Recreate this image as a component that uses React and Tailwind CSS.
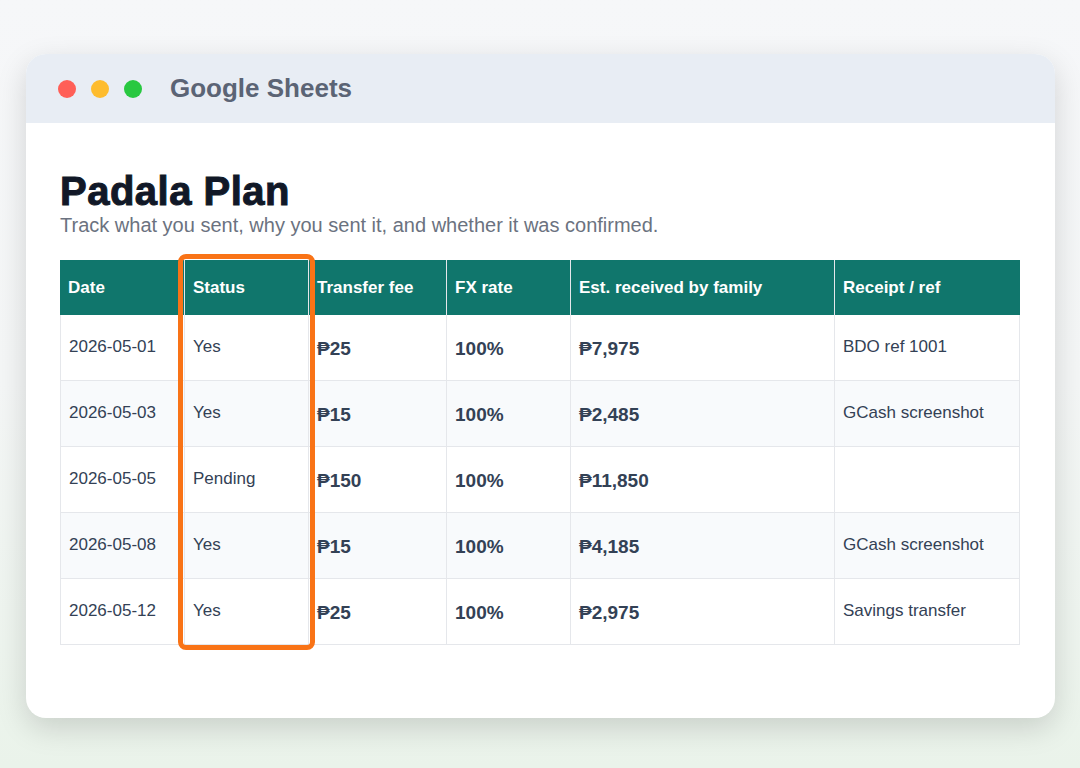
export default function App() {
  const rows = [
    ["2026-05-01", "Yes", "₱25", "100%", "₱7,975", "BDO ref 1001"],
    ["2026-05-03", "Yes", "₱15", "100%", "₱2,485", "GCash screenshot"],
    ["2026-05-05", "Pending", "₱150", "100%", "₱11,850", ""],
    ["2026-05-08", "Yes", "₱15", "100%", "₱4,185", "GCash screenshot"],
    ["2026-05-12", "Yes", "₱25", "100%", "₱2,975", "Savings transfer"],
  ];
  const widths = ["w-[124px]", "w-[124px]", "w-[138px]", "w-[124px]", "w-[264px]", "w-[186px]"];
  const heads = ["Date", "Status", "Transfer fee", "FX rate", "Est. received by family", "Receipt / ref"];
  return (
    <div className="w-[1080px] h-[768px] bg-gradient-to-b from-[#f6f7f9] via-[#f4f6f6] to-[#eaf3ea] pt-[54px] pl-[26px]" style={{ fontFamily: '"Liberation Sans", Arial, sans-serif' }}>
      <div className="w-[1029px] h-[664px] bg-white rounded-[20px] overflow-hidden shadow-[0_10px_30px_rgba(0,0,0,0.15)]">
        <div className="h-[69px] bg-[#e8edf4] flex items-center pl-[32px]">
          <div className="flex gap-[15px]">
            <span className="w-[18px] h-[18px] rounded-full bg-[#ff5f57]" />
            <span className="w-[18px] h-[18px] rounded-full bg-[#febc2e]" />
            <span className="w-[18px] h-[18px] rounded-full bg-[#28c840]" />
          </div>
          <span className="ml-[28px] text-[26px] font-bold text-[#5b6475]">Google Sheets</span>
        </div>
        <div className="pl-[34px] pt-[46px]">
          <div className="text-[40px] leading-[44px] font-black text-[#111827] tracking-[0.5px]" style={{ WebkitTextStroke: "1px #111827" }}>Padala Plan</div>
          <div className="text-[20px] leading-[24px] text-[#6b7280]">Track what you sent, why you sent it, and whether it was confirmed.</div>
          <div className="relative mt-[23px] w-[960px]">
            <div className="flex h-[55px] bg-[#10766c] text-white font-bold text-[17px]">
              {heads.map((h, i) => (
                <div key={i} className={`${widths[i]} flex items-center px-[8px] border-l border-[#e5e7eb] first:border-l-0`}>{h}</div>
              ))}
            </div>
            {rows.map((r, ri) => (
              <div key={ri} className={`flex h-[66px] border-b border-[#e5e7eb] text-[17px] text-[#334155] ${ri % 2 ? "bg-[#f8fafc]" : "bg-white"}`}>
                {r.map((c, i) => (
                  <div key={i} className={`${widths[i]} flex items-center px-[8px] border-l border-[#e5e7eb] ${i === 5 ? "border-r" : ""} ${i >= 2 && i <= 4 ? "font-bold text-[19px] pt-[4px]" : "pb-[2px]"}`}>{c}</div>
                ))}
              </div>
            ))}
            <div className="absolute left-[118px] top-[-6px] w-[137px] h-[396px] border-[5px] border-[#f97316] rounded-[8px]" />
          </div>
        </div>
      </div>
    </div>
  );
}
